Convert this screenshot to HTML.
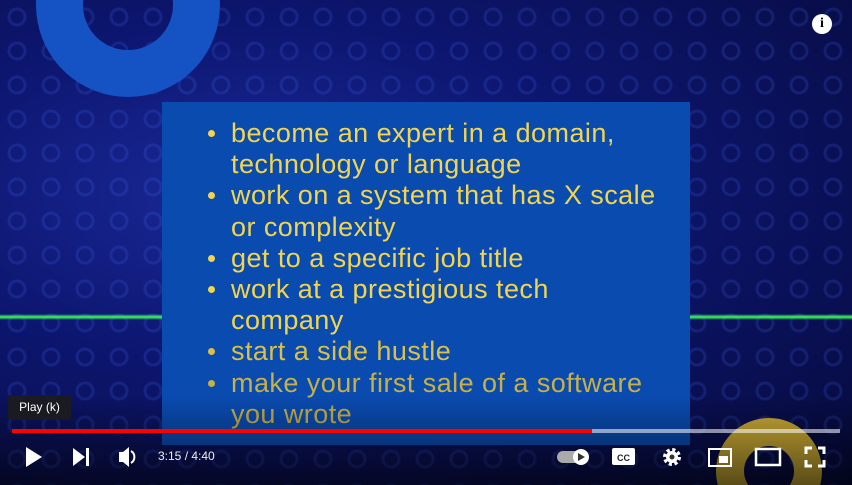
<!DOCTYPE html>
<html><head><style>
html,body{margin:0;padding:0;width:852px;height:485px;overflow:hidden}
#w{position:relative;width:852px;height:485px;overflow:hidden;font-family:"Liberation Sans",sans-serif;
background:radial-gradient(ellipse at 30% 40%,#1a2a9a 0%,#0d1670 40%,#060a3a 100%);}
.pat{position:absolute;inset:0;background-image:radial-gradient(circle,transparent 6px,rgba(70,110,255,.45) 7px,rgba(70,110,255,.45) 9px,transparent 10px);background-size:34px 34px;opacity:.4}
.green{position:absolute;left:0;right:0;top:314px;height:6px;background:linear-gradient(#0000,#3cff5a 50%,#0000)}
.ring{position:absolute;left:36px;top:-87px;width:184px;height:184px;border-radius:50%;box-sizing:border-box;border:47px solid #1552c4}
.ring2{position:absolute;left:716px;top:418px;width:106px;height:67px;overflow:hidden}
.ring2 i{position:absolute;left:0;top:0;width:106px;height:106px;border-radius:50%;box-sizing:border-box;border:28px solid #c9a934}
.box{position:absolute;left:162px;top:102px;width:528px;height:343px;background:#0a4bb0}
ul{margin:0;padding:0;list-style:none;position:absolute;left:206px;top:118px;font-size:27px;letter-spacing:.45px;line-height:31.2px;color:#f2d54e;white-space:nowrap}
li{position:relative;padding-left:25px}
li:before{content:"";position:absolute;left:2px;top:12px;width:7px;height:7px;border-radius:50%;background:currentColor}
.ctrl{position:absolute;left:0;right:0;bottom:0;height:90px;background:linear-gradient(#0000,rgba(0,0,0,.55))}
.bar{position:absolute;left:12px;top:429px;width:828px;height:4px;background:rgba(255,255,255,.55)}
.bar i{position:absolute;left:0;top:0;height:4px;width:580px;background:#f00}
.tip{position:absolute;left:8px;top:395px;width:63px;height:25px;background:rgba(28,28,28,.9);color:#fff;font-size:12px;line-height:25px;text-align:center;border-radius:2px}
.time{position:absolute;left:158px;top:449px;color:#eee;font-size:12px}
svg{position:absolute}
.info{position:absolute;left:812px;top:14px;width:20px;height:20px;border-radius:50%;background:#fff;color:#000;font:bold 14px/20px "Liberation Serif",serif;text-align:center}
</style></head><body><div id="w">
<div class="pat"></div>
<div class="green"></div>
<div class="ring"></div>
<div class="box"></div>
<ul>
<li>become an expert in a domain,<br>technology or language</li>
<li>work on a system that has X scale<br>or complexity</li>
<li>get to a specific job title</li>
<li>work at a prestigious tech<br>company</li>
<li style="color:#d8c04a">start a side hustle</li>
<li style="color:#c6b048">make your first sale of a software<br>you wrote</li>
</ul>
<div class="ring2"><i></i></div>
<div class="ctrl"></div>
<div class="tip">Play (k)</div>
<div class="bar"><i></i></div>
<div class="info">i</div>
<svg width="852" height="485" style="left:0;top:0">
<g fill="#fff">
<path d="M26 447 L42 457 L26 467Z"/>
<path d="M73 448 L85 457 L73 466Z"/><rect x="86" y="448" width="3" height="18"/>
<path d="M119 452 h4 l6 -5 v20 l-6 -5 h-4z"/><path d="M131 451 a7 7 0 0 1 0 12" stroke="#fff" stroke-width="2" fill="none"/>
<rect x="557" y="451" width="28" height="12" rx="6" fill="#aaa"/><circle cx="581" cy="457" r="8"/><path d="M578 453 L585 457 L578 461Z" fill="#333"/>
<rect x="612" y="448" width="23" height="17" rx="2"/>
<text x="623.5" y="461" font-family="Liberation Sans" font-size="9" font-weight="bold" fill="#222" text-anchor="middle">CC</text>
<circle cx="672" cy="457" r="7" stroke="#fff" stroke-width="4" fill="none" stroke-dasharray="3 2.5"/><circle cx="672" cy="457" r="6"/><circle cx="672" cy="457" r="2.5" fill="#333"/>
<rect x="709" y="449" width="22" height="17" stroke="#fff" stroke-width="2" fill="none"/><rect x="719" y="456" width="9" height="7"/>
<rect x="756" y="449" width="24" height="16" stroke="#fff" stroke-width="2.5" fill="none"/>
<path d="M806 454v-6h6M818 448h6v6M824 460v6h-6M812 466h-6v-6" stroke="#fff" stroke-width="3" fill="none"/>
</g></svg>
<div class="time">3:15 / 4:40</div>
</div></body></html>
